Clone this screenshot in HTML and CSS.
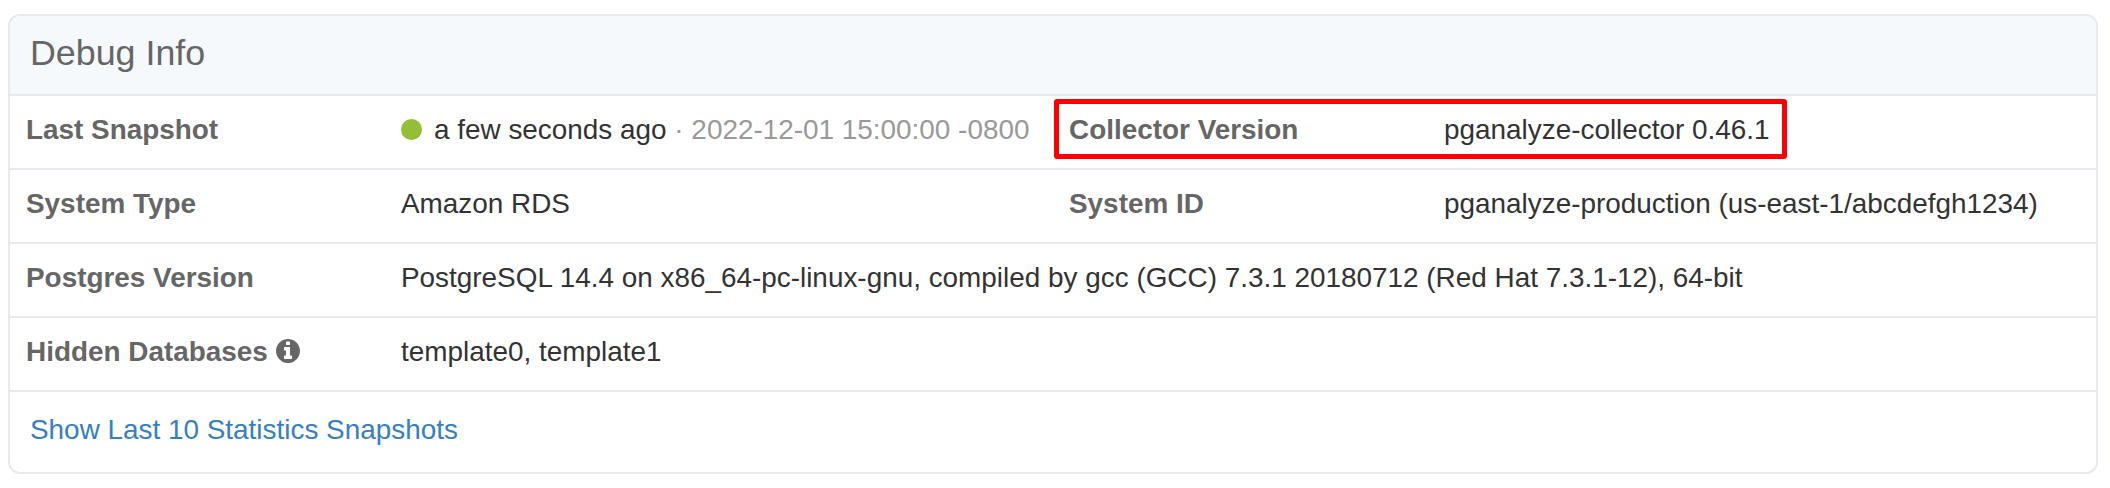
FILE: index.html
```html
<!DOCTYPE html>
<html lang="en">
<head>
<meta charset="utf-8">
<title>Debug Info</title>
<link rel="stylesheet" href="styles.css">
</head>
<body>
<section class="card">
  <header class="card-head"><h2>Debug Info</h2></header>
  <div class="row">
    <div class="label">Last Snapshot</div>
    <div class="value"><span class="dot"></span>a few seconds ago <span class="muted">· 2022-12-01 15:00:00 -0800</span></div>
    <div class="label">Collector Version</div>
    <div class="value">pganalyze-collector 0.46.1</div>
    <div class="highlight"></div>
  </div>
  <div class="row">
    <div class="label">System Type</div>
    <div class="value">Amazon RDS</div>
    <div class="label">System ID</div>
    <div class="value">pganalyze-production (us-east-1/abcdefgh1234)</div>
  </div>
  <div class="row">
    <div class="label">Postgres Version</div>
    <div class="value wide">PostgreSQL 14.4 on x86_64-pc-linux-gnu, compiled by gcc (GCC) 7.3.1 20180712 (Red Hat 7.3.1-12), 64-bit</div>
  </div>
  <div class="row">
    <div class="label">Hidden Databases <svg class="info" viewBox="128 128 1536 1536" aria-hidden="true"><path d="M1152 1376v-160q0-14-9-23t-23-9h-96v-512q0-14-9-23t-23-9h-320q-14 0-23 9t-9 23v160q0 14 9 23t23 9h96v320h-96q-14 0-23 9t-9 23v160q0 14 9 23t23 9h448q14 0 23-9t9-23zm-128-896v-160q0-14-9-23t-23-9h-192q-14 0-23 9t-9 23v160q0 14 9 23t23 9h192q14 0 23-9t9-23zm640 416q0 209-103 385.5t-279.5 279.5-385.5 103-385.5-103-279.5-279.5-103-385.5 103-385.5 279.5-279.5 385.5-103 385.5 103 279.5 279.5 103 385.5z"/></svg></div>
    <div class="value wide">template0, template1</div>
  </div>
  <footer class="card-foot"><a href="#">Show Last 10 Statistics Snapshots</a></footer>
</section>
</body>
</html>
```
FILE: styles.css
```css
* { box-sizing: border-box; }
html, body { margin: 0; background: #fff; }
body {
  padding: 14px 12px 14px 8px;
  font-family: "Liberation Sans", Arial, sans-serif;
  font-size: 27.9px;
  line-height: 40px;
  color: #333;
}
.card {
  height: 460px;
  border: 2px solid #e6eaf0;
  border-radius: 12px;
  overflow: hidden;
  display: flex;
  flex-direction: column;
}
.card-head {
  height: 80px;
  flex: none;
  padding: 0 20px 5px;
  background: #f6f9fc;
  border-bottom: 2px solid #e8e8ef;
  display: flex;
  align-items: center;
}
.card-head h2 {
  margin: 0;
  font-size: 35.8px;
  font-weight: 400;
  color: #666;
}
.row {
  position: relative;
  height: 74px;
  flex: none;
  padding: 0 0 5px 16px;
  border-bottom: 2px solid #e8e8ef;
  display: grid;
  grid-template-columns: 375px 668px 375px 1fr;
  align-items: center;
}
.label { font-weight: 700; color: #666; white-space: nowrap; }
.value { white-space: nowrap; }
.wide { grid-column: 2 / 5; }
.muted { color: #999; }
.dot {
  display: inline-block;
  width: 21px;
  height: 21px;
  margin-right: 12px;
  border-radius: 50%;
  background: #92be38;
  vertical-align: -1px;
}
.info {
  width: 24px;
  height: 24px;
  fill: #666;
  vertical-align: -2px;
}
.highlight {
  position: absolute;
  left: 1044px;
  top: 3px;
  width: 733px;
  height: 60px;
  border: 5px solid #f00;
  border-radius: 3px;
}
.card-foot {
  flex: 1;
  padding: 0 20px 5px;
  display: flex;
  align-items: center;
}
.card-foot a { color: #3580c4; text-decoration: none; }
```
